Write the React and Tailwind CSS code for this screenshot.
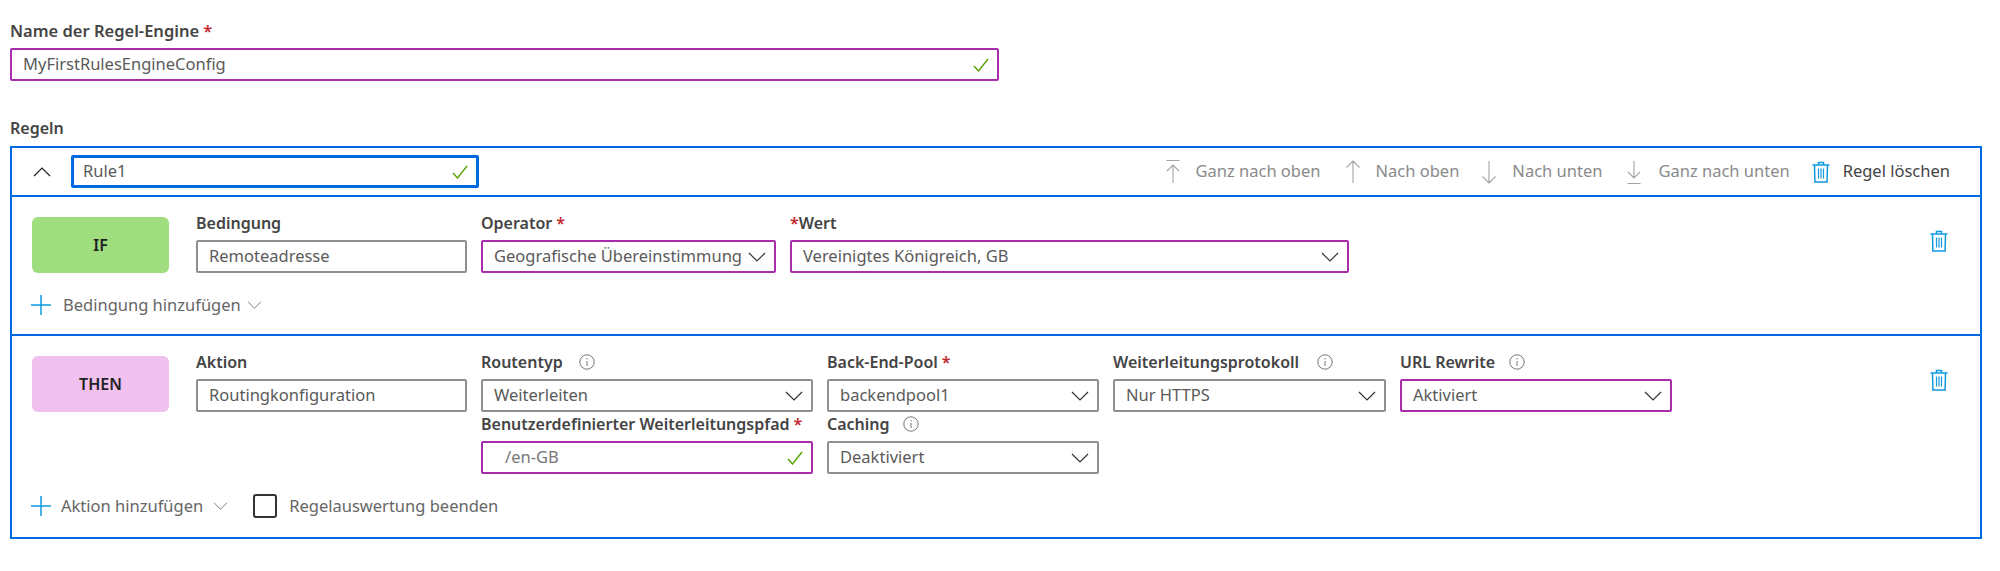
import React from "react";

const Chevron = ({ className = "w-[18px] h-[10px]", stroke = "#333" }) => (
  <svg viewBox="0 0 18 10" className={`${className} shrink-0`} fill="none" stroke={stroke} strokeWidth="1.2"><path d="M1 1l8 8 8-8" /></svg>
);
const Check = () => (
  <svg viewBox="0 0 16 14" className="w-[16px] h-[14px] shrink-0" fill="none" stroke="#57a300" strokeWidth="1.4"><path d="M1 8l4.5 5L15 1" /></svg>
);
const Trash = ({ color = "#0f9ae0" }) => (
  <svg viewBox="0 0 18 22" className="w-[18px] h-[22px] shrink-0" fill="none" stroke={color} strokeWidth="1.5">
    <path d="M0.5 4h17M6.5 4V1.5h5V4M2.5 4l.4 17h12.2l.4-17" />
    <path d="M6.5 7.5v10M9 7.5v10M11.5 7.5v10" strokeWidth="1.2" />
  </svg>
);
const Info = () => (
  <svg viewBox="0 0 16 16" className="w-[16px] h-[16px] shrink-0" fill="none" stroke="#777" strokeWidth="1">
    <circle cx="8" cy="8" r="7.2" />
    <path d="M8 7v5M8 4v1.4" />
  </svg>
);
const Plus = () => (
  <svg viewBox="0 0 20 20" className="w-[20px] h-[20px] shrink-0 -ml-[1px]" fill="none" stroke="#0f9ae0" strokeWidth="1.5"><path d="M10 0v20M0 10h20" /></svg>
);
const ArrowUp = () => (
  <svg viewBox="0 0 16 24" className="w-[16px] h-[24px] shrink-0" fill="none" stroke="#a3a3a3" strokeWidth="1.1">
    <path d="M8 23V1M1.5 7.5L8 1l6.5 6.5" />
  </svg>
);
const ArrowDown = () => (
  <svg viewBox="0 0 16 24" className="w-[16px] h-[24px] shrink-0" fill="none" stroke="#a3a3a3" strokeWidth="1.1">
    <path d="M8 1v22M1.5 16.5L8 23l6.5-6.5" />
  </svg>
);
const ArrowTop = () => (
  <svg viewBox="0 0 16 24" className="w-[16px] h-[24px] shrink-0" fill="none" stroke="#a3a3a3" strokeWidth="1.1">
    <path d="M1.5 0.5h13M8 23V5M2 11l6-6 6 6" />
  </svg>
);
const ArrowBottom = () => (
  <svg viewBox="0 0 16 24" className="w-[16px] h-[24px] shrink-0" fill="none" stroke="#a3a3a3" strokeWidth="1.1">
    <path d="M1.5 23.5h13M8 1v17M2 12l6 6 6-6" />
  </svg>
);

const Label = ({ children, req, reqFirst, info }) => (
  <div className="h-[18px] mb-[8px] flex items-center text-[16px] leading-[18px] font-semibold text-[#444] whitespace-nowrap">
    {reqFirst && <span className="text-[#c4262e]">*</span>}
    {children}
    {req && <span className="text-[#c4262e] ml-[4px]">*</span>}
    {info && <span className={`block ${info}`}><Info /></span>}
  </div>
);

const Box = ({ purple, children, chevron, check, pl = "pl-[11px]", muted }) => (
  <div className={`h-[33px] flex items-center justify-between ${pl} pr-[8px] border-2 rounded-[2px] bg-white text-[16.5px] whitespace-nowrap ${muted ? "text-[#777]" : "text-[#5a5a5a]"} ${purple ? "border-[#a82cab]" : "border-[#8f8f8f]"}`}>
    <span>{children}</span>
    {chevron && <Chevron />}
    {check && <Check />}
  </div>
);

const Field = ({ label, req, reqFirst, info, className = "", ...rest }) => (
  <div className={className}>
    <Label req={req} reqFirst={reqFirst} info={info}>{label}</Label>
    <Box {...rest} />
  </div>
);

const Tool = ({ icon, text, dark, className }) => (
  <div className={`flex items-center text-[16.5px] ${dark ? "text-[#444]" : "text-[#8a8a8a]"} ${className}`}>
    {icon}
    <span>{text}</span>
  </div>
);

export default function App() {
  return (
    <div className="min-h-[571px] bg-white pl-[10px] pr-[18px] pt-[22px] text-[#444] [font-family:'Noto_Sans','Open_Sans',sans-serif]">
      <div className="h-[18px] mb-[8px] text-[16.5px] leading-[18px] font-semibold">
        Name der Regel-Engine <span className="text-[#c4262e]">*</span>
      </div>
      <div className="w-[989px]">
        <Box purple check>MyFirstRulesEngineConfig</Box>
      </div>
      <div className="mt-[38px] h-[18px] mb-[9px] text-[16px] leading-[18px] font-semibold">Regeln</div>

      <div className="border-2 border-[#0069e0]">
        <div className="h-[49px] flex items-center border-b-2 border-[#0069e0] pl-[21px] pr-[30px]">
          <Chevron className="w-[18px] h-[10px] rotate-180" stroke="#222" />
          <div className="ml-[20px] w-[408px] h-[33px] flex items-center justify-between pl-[9px] pr-[8px] border-[3px] border-[#0069e0] rounded-[2px] text-[16.5px] text-[#5a5a5a]">
            <span>Rule1</span>
            <Check />
          </div>
          <div className="ml-auto flex items-center">
            <Tool icon={<ArrowTop />} text="Ganz nach oben" className="gap-[15px]" />
            <Tool icon={<ArrowUp />} text="Nach oben" className="gap-[15px] ml-[24px]" />
            <Tool icon={<ArrowDown />} text="Nach unten" className="gap-[15px] ml-[22px]" />
            <Tool icon={<ArrowBottom />} text="Ganz nach unten" className="gap-[16px] ml-[24px]" />
            <Tool dark icon={<Trash />} text="Regel löschen" className="gap-[13px] ml-[22px]" />
          </div>
        </div>

        <div className="h-[139px] border-b-2 border-[#0069e0] pt-[17px] pl-[20px] pr-[32px]">
          <div className="flex">
            <div className="mt-[3px] w-[137px] h-[56px] rounded-[6px] bg-[#9fdd7f] flex items-center justify-center text-[16px] font-semibold text-[#222]">IF</div>
            <div className="ml-[27px] flex gap-[14px]">
              <Field label="Bedingung" className="w-[271px]">Remoteadresse</Field>
              <Field label="Operator" req purple chevron className="w-[295px]">Geografische Übereinstimmung</Field>
              <Field label="Wert" reqFirst purple chevron className="w-[559px]">Vereinigtes Königreich, GB</Field>
            </div>
            <div className="ml-auto mt-[16px]"><Trash /></div>
          </div>
          <div className="mt-[20px] flex items-center text-[16.5px] text-[#666]">
            <Plus />
            <span className="ml-[12px]">Bedingung hinzufügen</span>
            <Chevron className="ml-[6px] w-[15px] h-[8px]" stroke="#777" />
          </div>
        </div>

        <div className="h-[201px] pt-[17px] pl-[20px] pr-[32px]">
          <div className="flex">
            <div className="mt-[3px] w-[137px] h-[56px] rounded-[6px] bg-[#f0c0ee] flex items-center justify-center text-[16px] font-semibold text-[#222]">THEN</div>
            <div className="ml-[27px] grid grid-cols-[271px_332px_272px_273px_272px] gap-x-[14px] gap-y-[3px]">
              <Field label="Aktion">Routingkonfiguration</Field>
              <Field label="Routentyp" info="ml-[16px]" chevron>Weiterleiten</Field>
              <Field label="Back-End-Pool" req chevron>backendpool1</Field>
              <Field label="Weiterleitungsprotokoll" info="ml-[18px]" chevron>Nur HTTPS</Field>
              <Field label="URL Rewrite" info="ml-[14px]" purple chevron>Aktiviert</Field>
              <Field label="Benutzerdefinierter Weiterleitungspfad" req purple check muted pl="pl-[22px]" className="col-start-2">/en-GB</Field>
              <Field label="Caching" info="ml-[13px]" chevron>Deaktiviert</Field>
            </div>
            <div className="ml-auto mt-[16px]"><Trash /></div>
          </div>
          <div className="mt-[20px] flex items-center text-[16.5px] text-[#666]">
            <Plus />
            <span className="ml-[10px]">Aktion hinzufügen</span>
            <Chevron className="ml-[10px] w-[15px] h-[8px]" stroke="#777" />
            <span className="ml-[25px] w-[24px] h-[24px] border-2 border-[#333] rounded-[3px]" />
            <span className="ml-[12px]">Regelauswertung beenden</span>
          </div>
        </div>
      </div>
    </div>
  );
}
